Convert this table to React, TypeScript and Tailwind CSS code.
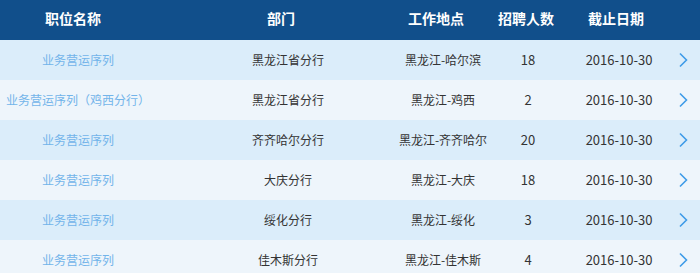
import React from 'react';

type Job = {
  title: string;
  dept: string;
  place: string;
  count: number;
  date: string;
};

const jobs: Job[] = [
  { title: '业务营运序列', dept: '黑龙江省分行', place: '黑龙江-哈尔滨', count: 18, date: '2016-10-30' },
  { title: '业务营运序列（鸡西分行）', dept: '黑龙江省分行', place: '黑龙江-鸡西', count: 2, date: '2016-10-30' },
  { title: '业务营运序列', dept: '齐齐哈尔分行', place: '黑龙江-齐齐哈尔', count: 20, date: '2016-10-30' },
  { title: '业务营运序列', dept: '大庆分行', place: '黑龙江-大庆', count: 18, date: '2016-10-30' },
  { title: '业务营运序列', dept: '绥化分行', place: '黑龙江-绥化', count: 3, date: '2016-10-30' },
  { title: '业务营运序列', dept: '佳木斯分行', place: '黑龙江-佳木斯', count: 4, date: '2016-10-30' },
];

const Chevron = () => (
  <svg width="10" height="16" viewBox="0 0 10 16" fill="none">
    <path d="M2 1.5 L8.5 8 L2 14.5" stroke="#3e9be8" strokeWidth="1.6" />
  </svg>
);

export default function App() {
  return (
    <div
      className="w-[700px] h-[273px] overflow-hidden bg-[#eef5fb]"
      style={{ fontFamily: '"Microsoft YaHei", "Noto Sans CJK SC", sans-serif' }}
    >
      {/* 表头 */}
      <div className="flex h-10 items-center pb-1 bg-[#114f8b] text-white text-sm font-bold whitespace-nowrap">
        <div className="w-[146px] text-center">职位名称</div>
        <div className="ml-[85px] w-[100px] text-center">部门</div>
        <div className="ml-[65px] w-[80px] text-center">工作地点</div>
        <div className="ml-[15px] w-[70px] text-center">招聘人数</div>
        <div className="ml-[20px] w-[70px] text-center">截止日期</div>
      </div>

      {jobs.map((job, i) => (
        <div
          key={i}
          className={
            'flex h-10 items-center text-xs text-[#333] whitespace-nowrap ' +
            (i % 2 === 0 ? 'bg-[#dbedfa]' : 'bg-[#eef5fb]')
          }
        >
          <div className="w-[156px] text-center text-[#72b4ea]">{job.title}</div>
          <div className="ml-[77px] w-[110px] text-center">{job.dept}</div>
          <div className="ml-[50px] w-[100px] text-center">{job.place}</div>
          <div className="ml-[15px] w-[40px] text-center text-[13px]">{job.count}</div>
          <div className="ml-[31px] w-[80px] text-center text-[13px]">{job.date}</div>
          <div className="ml-[14px] w-[20px] flex justify-center">
            <Chevron />
          </div>
        </div>
      ))}
    </div>
  );
}
